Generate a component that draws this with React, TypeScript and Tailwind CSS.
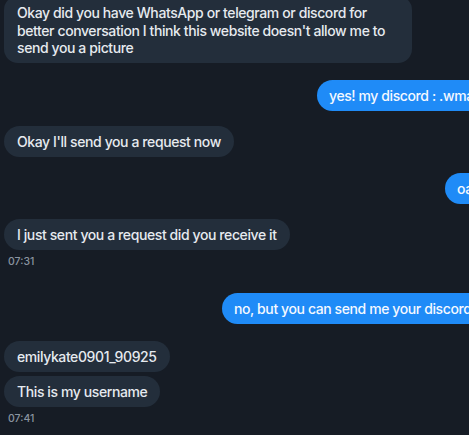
import React from "react";

const font = { fontFamily: "Inter, 'Noto Sans', sans-serif" };

function Left({ children, className = "" }: { children: React.ReactNode; className?: string }) {
  return (
    <div className={"self-start rounded-[16px] bg-[#232e3b] px-[13px] py-[6px] text-[14px] font-medium leading-[19px] tracking-[-0.4px] text-[#e6eaef] " + className}>
      {children}
    </div>
  );
}

function Right({ children, ml }: { children: React.ReactNode; ml: string }) {
  return (
    <div className={"self-start whitespace-nowrap rounded-l-[16px] bg-[#1f8bf7] py-[6px] pl-[12px] pr-[16px] text-[14px] font-medium leading-[19px] tracking-[-0.4px] text-[#f4f8ff] " + ml}>
      {children}
    </div>
  );
}

function Time({ t }: { t: string }) {
  return <div className="mt-[5px] pl-[4px] text-[10.5px] font-medium leading-[13px] text-[#8a94a0]">{t}</div>;
}

export default function App() {
  return (
    <div style={font} className="h-[435px] w-[469px] overflow-hidden bg-[#161c25]">
      <div className="flex flex-col px-[4px]">
        <div className="-mt-[4px] w-[408px] rounded-[14px] bg-[#232e3b] px-[13px] pb-[6px] pt-[8px] text-[14px] font-medium leading-[17.5px] tracking-[-0.4px] text-[#e6eaef]">
          Okay did you have WhatsApp or telegram or discord for better conversation I think this website doesn't allow me to send you a picture
        </div>

        <div className="mt-[17px] flex">
          <Right ml="ml-[313px]">yes! my discord : .wmaxx</Right>
        </div>

        <div className="mt-[15px] flex">
          <Left>Okay I'll send you a request now</Left>
        </div>

        <div className="mt-[16px] flex">
          <Right ml="ml-[441px]">oaky</Right>
        </div>

        <div className="mt-[15px] flex flex-col">
          <Left>I just sent you a request did you receive it</Left>
          <Time t="07:31" />
        </div>

        <div className="mt-[25px] flex">
          <Right ml="ml-[218px]">no, but you can send me your discord</Right>
        </div>

        <div className="mt-[17px] flex flex-col gap-[4px]">
          <Left>emilykate0901_90925</Left>
          <Left>This is my username</Left>
        </div>
        <Time t="07:41" />
      </div>
    </div>
  );
}
